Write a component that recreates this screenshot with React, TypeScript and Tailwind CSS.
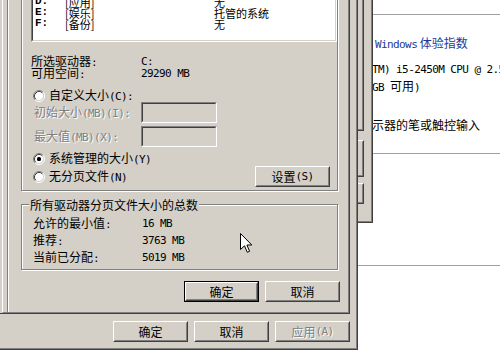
import type { ReactNode } from "react";

// windows classic 3d edges
const raisedOuter = "border border-t-white border-l-white border-r-[#404040] border-b-[#404040]";
const raisedInner = "border border-t-[#D4D0C8] border-l-[#D4D0C8] border-r-[#808080] border-b-[#808080]";
const sunkenOuter = "border border-t-[#808080] border-l-[#808080] border-r-white border-b-white";
const sunkenInner = "border border-t-[#404040] border-l-[#404040] border-r-[#D4D0C8] border-b-[#D4D0C8]";
const etched = "border border-[#808080] shadow-[inset_1px_1px_0_#fff,1px_1px_0_#fff]";
const dim = "text-[#808080] [text-shadow:1px_1px_0_#fff]";

function M({ children }: { children: ReactNode }) {
  return <span className="font-['DejaVu_Sans_Mono',monospace] text-[11px] tracking-[-0.6px]">{children}</span>;
}

function Button({ children, isDefault, disabled }: { children: ReactNode; isDefault?: boolean; disabled?: boolean }) {
  const face = (
    <div className={`h-full ${raisedOuter}`}>
      <div className={`h-full ${raisedInner} flex items-center justify-center ${disabled ? dim : ""}`}>
        {children}
      </div>
    </div>
  );
  return (
    <div className={`w-[75px] h-[21px] ${isDefault ? "border border-black" : ""}`}>{face}</div>
  );
}

function Radio({ checked }: { checked?: boolean }) {
  return (
    <svg width="12" height="12" viewBox="0 0 12 12" className="shrink-0">
      <circle cx="6" cy="6" r="4.5" fill="#fff" />
      <path d="M2.11 9.89 A5.5 5.5 0 0 1 9.89 2.11" fill="none" stroke="#808080" />
      <path d="M2.82 9.18 A4.5 4.5 0 0 1 9.18 2.82" fill="none" stroke="#404040" />
      <path d="M2.11 9.89 A5.5 5.5 0 0 0 9.89 2.11" fill="none" stroke="#fff" />
      <path d="M2.82 9.18 A4.5 4.5 0 0 0 9.18 2.82" fill="none" stroke="#D4D0C8" />
      {checked && <rect x="4" y="4" width="4" height="4" rx="1.5" fill="#000" />}
    </svg>
  );
}

function TextBox() {
  return (
    <div className={`w-[76px] h-[21px] ${sunkenOuter}`}>
      <div className={`h-full ${sunkenInner}`} />
    </div>
  );
}

const drives = [
  { d: "D:", label: "[应用]", type: "无" },
  { d: "E:", label: "[娱乐]", type: "托管的系统" },
  { d: "F:", label: "[备份]", type: "无" },
];

export default function App() {
  return (
    <div className="relative w-[500px] h-[350px] overflow-hidden bg-white text-black text-[12px] leading-[12px] font-['Noto_Sans_CJK_SC',sans-serif]">
      {/* system window in the back */}
      <div className="absolute left-[358px] top-0 right-0 bottom-0 flex flex-col">
        <div className="h-[14px]" />
        <div className="h-px bg-[#A0A0A0]" />
        <div className="mt-[22px] pl-[17px] h-[12px] whitespace-nowrap text-[#1a3a9a]">
          <M>Windows</M> 体验指数
        </div>
        <div className="mt-[13px] pl-[14px] h-[12px] whitespace-nowrap">
          <M>TM) i5-2450M CPU @ 2.5</M>
        </div>
        <div className="mt-[6px] pl-[14px] h-[12px] whitespace-nowrap">
          <M>GB </M>可用<M>)</M>
        </div>
        <div className="mt-[27px] pl-[14px] h-[12px] whitespace-nowrap">示器的笔或触控输入</div>
        <div className="mt-[22px] h-px bg-[#A0A0A0]" />
        <div className="mt-[15px] pl-[8px] h-[12px]"><M>Y</M></div>
        <div className="mt-[8px] pl-[8px] h-[12px]"><M>Y</M></div>
        <div className="mt-[64px] h-px bg-[#A0A0A0]" />
      </div>

      {/* system properties */}
      <div className="absolute left-0 top-0 w-[373px] h-[223px] bg-[#D4D0C8] border-r border-b border-[#404040]">
        <div className="h-full border-r border-b border-[#808080] flex flex-col items-end pr-[7px]">
          <div className={`w-[40px] h-[141px] mt-[-10px] ${raisedOuter}`}>
            <div className={`h-full ${raisedInner}`} />
          </div>
          <div className={`w-[40px] h-[37px] mt-[9px] ${raisedOuter}`}>
            <div className={`h-full ${raisedInner}`} />
          </div>
          <div className={`w-[40px] h-[21px] mt-[6px] ${raisedOuter}`}>
            <div className={`h-full ${raisedInner}`} />
          </div>
        </div>
      </div>

      {/* performance options */}
      <div className="absolute left-0 top-0 w-[358px] h-[350px] bg-[#D4D0C8] border-r border-b border-[#404040]">
        <div className="h-full border-r border-b border-[#808080] flex justify-end items-end gap-[6px] pr-[6px] pb-[6px]">
          <Button>确定</Button>
          <Button>取消</Button>
          <Button disabled>
            应用<M>(A)</M>
          </Button>
        </div>
      </div>

      {/* virtual memory */}
      <div className="absolute left-0 top-0 w-[350px] h-[314px] bg-[#D4D0C8] border-r border-b border-[#404040] pl-[2px]">
        <div className="h-full border-r border-b border-[#808080] border-l border-l-white pl-[4px]">
          <div className="h-full border-l border-l-[#808080] shadow-[inset_1px_0_0_#fff] flex flex-col">
            {/* drives group */}
            <div className={`ml-[13px] w-[317px] mt-[-30px] pb-[3px] ${etched}`}>
              <div className={`ml-[9px] mt-[9px] w-[306px] h-[62px] ${sunkenOuter}`}>
                <div className={`h-full bg-white pt-[15px] text-[11px] leading-[11px] ${sunkenInner}`}>
                  {drives.map((r) => (
                    <div key={r.d} className="h-[11px] flex items-center whitespace-nowrap">
                      <span className="w-[32px] pl-[2px] self-start leading-[9px] font-['Liberation_Mono',monospace] text-[11px] font-bold">{r.d}</span>
                      <span className="w-[149px]">{r.label}</span>
                      <span>{r.type}</span>
                    </div>
                  ))}
                </div>
              </div>

              <div className="mt-[14px] ml-[9px] flex h-[12px] items-center">
                <span className="w-[110px]">所选驱动器<M>:</M></span>
                <M>C:</M>
              </div>
              <div className="ml-[9px] flex h-[12px] items-center">
                <span className="w-[110px]">可用空间<M>:</M></span>
                <M>29290 MB</M>
              </div>

              <div className="mt-[10px] ml-[11px] flex h-[12px] items-center gap-[4px]">
                <Radio />
                <span>自定义大小<M>(C):</M></span>
              </div>
              <div className="ml-[12px] flex h-[21px] items-center">
                <span className={`w-[107px] ${dim}`}>初始大小<M>(MB)(I):</M></span>
                <TextBox />
              </div>
              <div className="mt-[3px] ml-[12px] flex h-[21px] items-center">
                <span className={`w-[107px] ${dim}`}>最大值<M>(MB)(X):</M></span>
                <TextBox />
              </div>
              <div className="mt-[6px] ml-[11px] flex h-[12px] items-center gap-[4px]">
                <Radio checked />
                <span>系统管理的大小<M>(Y)</M></span>
              </div>
              <div className="mt-px ml-[11px] mr-[7px] flex h-[21px] items-center justify-between">
                <div className="flex items-center gap-[4px]">
                  <Radio />
                  <span>无分页文件<M>(N)</M></span>
                </div>
                <Button>
                  设置<M>(S)</M>
                </Button>
              </div>
            </div>

            {/* totals group */}
            <div className={`relative ml-[13px] w-[317px] mt-[13px] pt-[12px] pb-[5px] pl-[11px] ${etched}`}>
              <span className="absolute left-[7px] -top-[7px] px-px bg-[#D4D0C8] leading-[13px]">
                所有驱动器分页文件大小的总数
              </span>
              <div className="flex flex-col gap-[4px]">
                <div className="flex h-[13px] items-center">
                  <span className="w-[109px]">允许的最小值<M>:</M></span>
                  <M>16 MB</M>
                </div>
                <div className="flex h-[13px] items-center">
                  <span className="w-[109px]">推荐<M>:</M></span>
                  <M>3763 MB</M>
                </div>
                <div className="flex h-[13px] items-center">
                  <span className="w-[109px]">当前已分配<M>:</M></span>
                  <M>5019 MB</M>
                </div>
              </div>
            </div>

            <div className="mt-[11px] mr-[8px] flex justify-end gap-[6px]">
              <Button isDefault>确定</Button>
              <Button>取消</Button>
            </div>
          </div>
        </div>
      </div>

      {/* mouse pointer */}
      <svg className="absolute left-[240px] top-[233px]" width="13" height="21" viewBox="0 0 13 21">
        <path d="M0.5 0.5 L0.5 16.5 L4.5 12.8 L7.3 19.3 L9.6 18.3 L6.9 12 L11.8 12 Z" fill="#fff" stroke="#000" strokeLinejoin="miter" />
      </svg>
    </div>
  );
}
